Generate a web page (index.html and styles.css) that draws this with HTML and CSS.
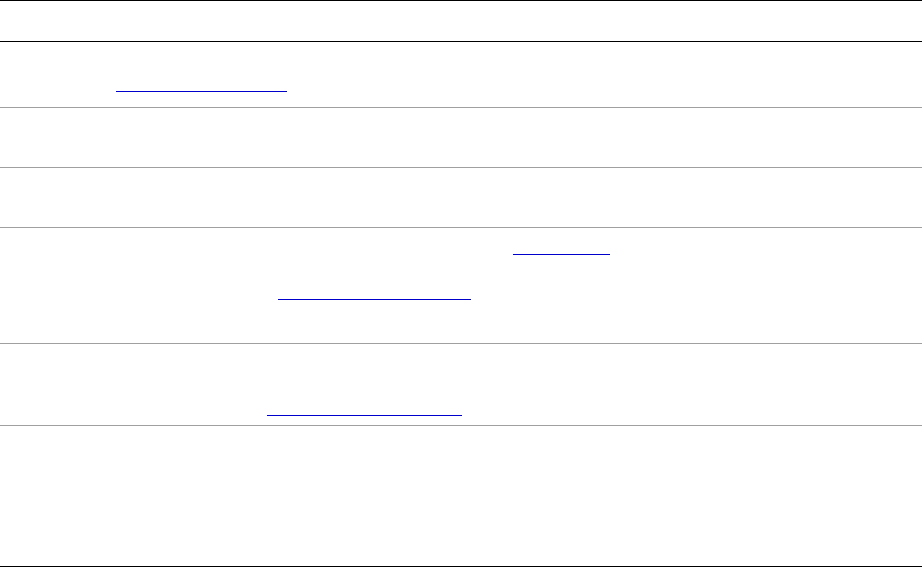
FILE: index.html
```html
<!DOCTYPE html>
<html>
<head>
<meta charset="utf-8">
<link rel="stylesheet" href="styles.css">
</head>
<body>
<div class="table">
  <div class="head"></div>
  <div class="row r1"><div class="link l1"></div></div>
  <div class="row r2"></div>
  <div class="row r3"></div>
  <div class="row r4"><div class="link l4a"></div><div class="link l4b"></div></div>
  <div class="row r5"><div class="link l5"></div></div>
  <div class="row r6 last"></div>
</div>
</body>
</html>
```
FILE: styles.css
```css
html, body {
  margin: 0;
  padding: 0;
  background: #ffffff;
  font-family: "Liberation Sans", Arial, sans-serif;
}
.table {
  width: 922px;
  border-top: 1px solid #000000;
  border-bottom: 1px solid #000000;
  box-sizing: border-box;
  height: 567px;
  display: flex;
  flex-direction: column;
}
.head {
  height: 40px;
  border-bottom: 1px solid #000000;
  flex: none;
}
.row {
  border-bottom: 1px solid #a0a0a0;
  flex: none;
  box-sizing: content-box;
}
.row.last {
  border-bottom: none;
  flex: 1;
}
.r1 { height: 65px; padding-top: 0; }
.r2 { height: 59px; }
.r3 { height: 59px; }
.r4 { height: 115px; }
.r5 { height: 81px; }
.link {
  height: 1px;
  background: #0000cc;
}
.r1, .r4, .r5 { display: flex; flex-direction: column; align-items: flex-start; }
.l1 { margin-top: 49px; margin-left: 116px; width: 171px; }
.l4a { margin-top: 26px; margin-left: 513px; width: 97px; }
.l4b { margin-top: 44px; margin-left: 278px; width: 193px; }
.l5 { margin-top: 71px; margin-left: 267px; width: 195px; }
```
